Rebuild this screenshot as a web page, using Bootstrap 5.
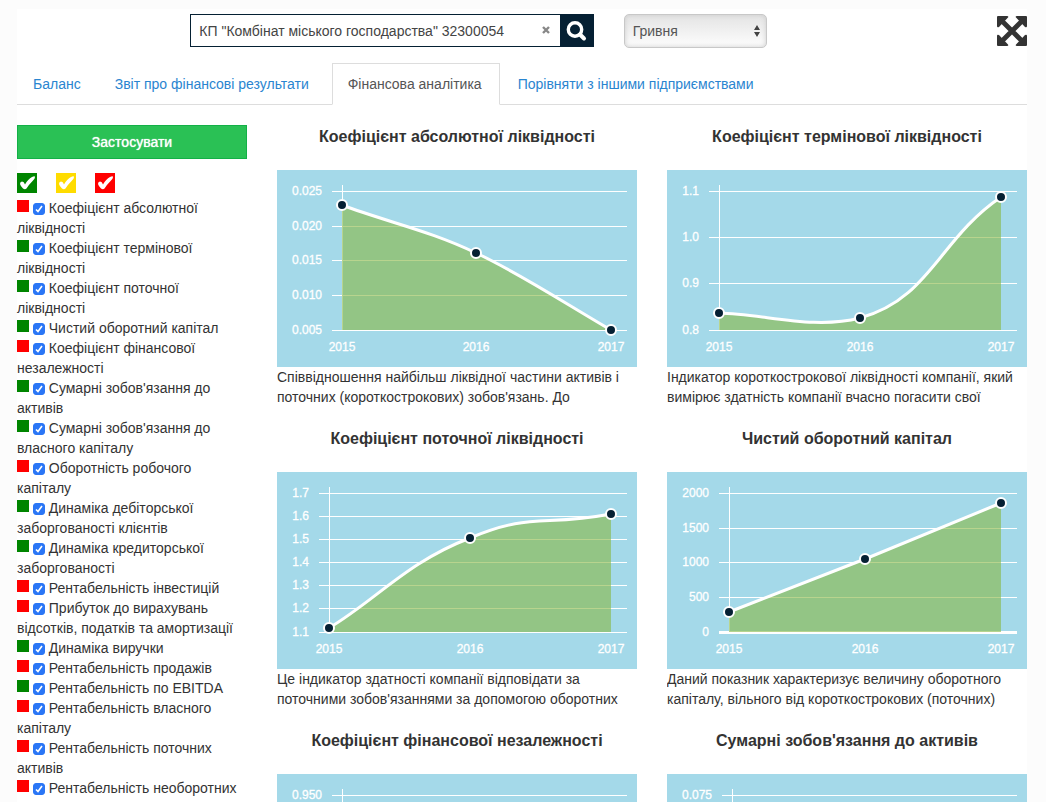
<!DOCTYPE html>
<html lang="uk">
<head>
<meta charset="utf-8">
<meta name="viewport" content="width=device-width, initial-scale=1">
<title>Фінансова аналітика</title>
<link href="https://cdn.jsdelivr.net/npm/bootstrap@5.3.0/dist/css/bootstrap.min.css" rel="stylesheet">
<style>
  body { background: #fcfcfc; color: #333; font: 14px/20px "Liberation Sans", Arial, sans-serif; padding: 9px 19px 0 17px; }
  .page { background: #fff; padding-top: 5px; }
  .row { --bs-gutter-x: 30px; }
  .search { border: 1px solid #052033; height: 33px; }
  .search input { border: 0; min-width: 0; padding: 0 8px; color: #444; background: #fff; outline: 0; }
  .search .clear { border: 0; background: none; padding: 0 9px 1px; line-height: 1; }
  .search .go { border: 0; background: #052033; width: 33px; padding: 0; }
  .currency { height: 34px; padding: 0 8px; border: 1px solid #c8c8c8; border-radius: 5px; color: #555; font-size: 14px; line-height: 20px; box-shadow: inset 0 0 5px #ccc;
    background: url("data:image/svg+xml,%3Csvg xmlns='http://www.w3.org/2000/svg' viewBox='0 0 6 12'%3E%3Cpath d='M0 5 3 0l3 5zM0 7h6l-3 5z' fill='%23444'/%3E%3C/svg%3E") no-repeat right 6px center / 6px 12px, linear-gradient(#e4e4e4, #fdfdfd); }
  .expand { border: 0; background: none; padding: 0; height: 30px; margin-top: 2px; }
  .nav-tabs { --bs-nav-tabs-border-color: #ddd; --bs-nav-tabs-border-radius: 0; margin: 15px 0 20px; }
  .nav-tabs .nav-link { padding: 10px 15px; margin-right: 2px; color: #2a85d0; }
  .nav-tabs .nav-link.active { color: #555; border-color: #ddd #ddd #fff; min-width: 168px; }
  .nav-tabs .tab-report { min-width: 231px; }
  .apply { height: 34px; border: 1px solid #13b047; border-radius: 0; background: #2ac155; color: #fff; font-size: 14px; line-height: 20px; padding: 0; text-shadow: 0 0 1px #fff; }
  .levels { gap: 19px; margin: 14px 0 5px; }
  .level { width: 20px; height: 20px; border: 0; padding: 0; display: block; }
  .ok { background: #008500; } .mid { background: #ffdc00; } .bad { background: #f00; }
  .swatch { display: inline-block; width: 12px; height: 12px; vertical-align: 1px; }
  .form-check-input { width: 12px; height: 12px; margin: 0; vertical-align: -2px; border-radius: 3px !important; }
  .form-check-input[type=checkbox]:checked { background-color: #2a76f6; border-color: #2a76f6;
    background-image: url("data:image/svg+xml,%3Csvg xmlns='http://www.w3.org/2000/svg' viewBox='0 0 10 10'%3E%3Cpath d='M2 5.500 4 7.500 8 2' fill='none' stroke='%23fff' stroke-width='1.600'/%3E%3C/svg%3E"); }
  .metric h4 { font-size: 16px; line-height: 24px; font-weight: 700; text-align: center; margin: 0 0 21px; }
  .metric p { height: 40px; overflow: hidden; margin: 0 0 20px; }
  .chart { display: block; width: 100%; background: #a4d9e9; font-size: 12px; }
  .chart text { fill: #fff; stroke: #fff; stroke-width: .3px; }
  .chart .y { text-anchor: end; } .chart .x { text-anchor: middle; }
  .grid-lines { stroke: #fff; fill: none; shape-rendering: crispEdges; }
  .area { fill: rgba(137,184,66,.6); }
  .curve { fill: none; stroke: #fff; stroke-width: 3; }
  .dots { fill: #052033; stroke: #fff; stroke-width: 2; }
</style>
<script src="https://cdn.jsdelivr.net/npm/bootstrap@5.3.0/dist/js/bootstrap.bundle.min.js"></script>
</head>
<body>
<main class="page">
  <div class="row">
    <div class="col-5 offset-2">
      <form class="search d-flex align-items-stretch">
        <input class="flex-grow-1" type="text" aria-label="Підприємство" value='КП "Комбінат міського господарства" 32300054'>
        <button class="clear" type="button" aria-label="Очистити"><svg class="d-block" width="10" height="10" viewBox="0 0 10 10"><path d="M2 2l6 6M8 2L2 8" stroke="#888" stroke-width="2.4"/></svg></button>
        <button class="go" type="button" aria-label="Пошук"><svg class="d-block mx-auto" width="22" height="22" viewBox="0 0 22 22" fill="none" stroke="#fff"><circle cx="10" cy="9.500" r="6.700" stroke-width="3.400"/><path d="M15 14.500l4 4" stroke-width="4" stroke-linecap="round"/></svg></button>
      </form>
    </div>
    <div class="col-2"><select class="form-select currency" aria-label="Валюта"><option>Гривня</option></select></div>
    <div class="col-3 d-flex justify-content-end align-items-start">
      <button class="expand" type="button" aria-label="На весь екран"><svg class="d-block" width="30" height="30" viewBox="0 0 30 30" fill="#333"><path d="M6 6l18 18M24 6L6 24" stroke="#333" stroke-width="4.800"/><path d="M1 0h9q2 0 1 1.500L2 11q-2 1-2-1V1q0-1 1-1zM29 0h-9q-2 0-1 1.500l9 9.500q2 1 2-1V1q0-1-1-1zM1 30h9q2 0 1-1.500L2 19q-2-1-2 1v9q0 1 1 1zM29 30h-9q-2 0-1-1.500l9-9.500q2-1 2 1v9q0 1-1 1z"/></svg></button>
    </div>
  </div>

  <ul class="nav nav-tabs">
    <li class="nav-item"><a class="nav-link" href="#">Баланс</a></li>
    <li class="nav-item"><a class="nav-link tab-report" href="#">Звіт про фінансові результати</a></li>
    <li class="nav-item"><a class="nav-link active" aria-current="page" href="#">Фінансова аналітика</a></li>
    <li class="nav-item"><a class="nav-link" href="#">Порівняти з іншими підприємствами</a></li>
  </ul>

  <div class="row">
    <aside class="col-3">
      <button class="btn apply w-100" type="button">Застосувати</button>
      <div class="levels d-flex">
        <button class="level ok" type="button" aria-label="Добре"><svg class="d-block" width="20" height="20"><path d="M3 11Q3 8.500 5 8.500T8 11.500Q11 6 15 4q3-1.500 3 0 0 1.500-2 3.500Q12 11.500 9.500 15.500 8 17 6 15.500 3.500 13 3 11z" fill="#fff"/></svg></button>
        <button class="level mid" type="button" aria-label="Задовільно"><svg class="d-block" width="20" height="20"><path d="M3 11Q3 8.500 5 8.500T8 11.500Q11 6 15 4q3-1.500 3 0 0 1.500-2 3.500Q12 11.500 9.500 15.500 8 17 6 15.500 3.500 13 3 11z" fill="#fff"/></svg></button>
        <button class="level bad" type="button" aria-label="Погано"><svg class="d-block" width="20" height="20"><path d="M3 11Q3 8.500 5 8.500T8 11.500Q11 6 15 4q3-1.500 3 0 0 1.500-2 3.500Q12 11.500 9.500 15.500 8 17 6 15.500 3.500 13 3 11z" fill="#fff"/></svg></button>
      </div>
      <div><span class="swatch bad"></span> <input class="form-check-input" type="checkbox" id="m1" checked> <label class="d-inline" for="m1">Коефіцієнт абсолютної ліквідності</label></div>
      <div><span class="swatch ok"></span> <input class="form-check-input" type="checkbox" id="m2" checked> <label class="d-inline" for="m2">Коефіцієнт термінової ліквідності</label></div>
      <div><span class="swatch ok"></span> <input class="form-check-input" type="checkbox" id="m3" checked> <label class="d-inline" for="m3">Коефіцієнт поточної ліквідності</label></div>
      <div><span class="swatch ok"></span> <input class="form-check-input" type="checkbox" id="m4" checked> <label class="d-inline" for="m4">Чистий оборотний капітал</label></div>
      <div><span class="swatch bad"></span> <input class="form-check-input" type="checkbox" id="m5" checked> <label class="d-inline" for="m5">Коефіцієнт фінансової незалежності</label></div>
      <div><span class="swatch ok"></span> <input class="form-check-input" type="checkbox" id="m6" checked> <label class="d-inline" for="m6">Сумарні зобов'язання до активів</label></div>
      <div><span class="swatch ok"></span> <input class="form-check-input" type="checkbox" id="m7" checked> <label class="d-inline" for="m7">Сумарні зобов'язання до власного капіталу</label></div>
      <div><span class="swatch bad"></span> <input class="form-check-input" type="checkbox" id="m8" checked> <label class="d-inline" for="m8">Оборотність робочого капіталу</label></div>
      <div><span class="swatch ok"></span> <input class="form-check-input" type="checkbox" id="m9" checked> <label class="d-inline" for="m9">Динаміка дебіторської заборгованості клієнтів</label></div>
      <div><span class="swatch ok"></span> <input class="form-check-input" type="checkbox" id="m10" checked> <label class="d-inline" for="m10">Динаміка кредиторської заборгованості</label></div>
      <div><span class="swatch bad"></span> <input class="form-check-input" type="checkbox" id="m11" checked> <label class="d-inline" for="m11">Рентабельність інвестицій</label></div>
      <div><span class="swatch bad"></span> <input class="form-check-input" type="checkbox" id="m12" checked> <label class="d-inline" for="m12">Прибуток до вирахувань відсотків, податків та амортизації</label></div>
      <div><span class="swatch ok"></span> <input class="form-check-input" type="checkbox" id="m13" checked> <label class="d-inline" for="m13">Динаміка виручки</label></div>
      <div><span class="swatch bad"></span> <input class="form-check-input" type="checkbox" id="m14" checked> <label class="d-inline" for="m14">Рентабельність продажів</label></div>
      <div><span class="swatch ok"></span> <input class="form-check-input" type="checkbox" id="m15" checked> <label class="d-inline" for="m15">Рентабельність по EBITDA</label></div>
      <div><span class="swatch bad"></span> <input class="form-check-input" type="checkbox" id="m16" checked> <label class="d-inline" for="m16">Рентабельність власного капіталу</label></div>
      <div><span class="swatch bad"></span> <input class="form-check-input" type="checkbox" id="m17" checked> <label class="d-inline" for="m17">Рентабельність поточних активів</label></div>
      <div><span class="swatch bad"></span> <input class="form-check-input" type="checkbox" id="m18" checked> <label class="d-inline" for="m18">Рентабельність необоротних</label></div>
    </aside>

    <div class="col-9">
      <div class="row">
        <section class="col-6 metric">
          <h4>Коефіцієнт абсолютної ліквідності</h4>
          <svg class="chart" viewBox="0 0 360 197">
            <path class="grid-lines" d="M55 21.500H350M55 56.500H350M55 90.500H350M55 125.500H350M55 160.500H350M65.500 15V160"/>
            <path class="area" d="M65 35C110 52 154 61 199 83C244 104 289 134 334 160H65z"/>
            <path class="curve" d="M65 35C110 52 154 61 199 83C244 104 289 134 334 160"/>
            <g class="dots"><circle cx="65" cy="35" r="5"/><circle cx="199" cy="83" r="5"/><circle cx="334" cy="160" r="5"/></g>
            <g class="y"><text x="45" y="25">0.025</text><text x="45" y="60">0.020</text><text x="45" y="94">0.015</text><text x="45" y="129">0.010</text><text x="45" y="164">0.005</text></g>
            <g class="x"><text x="65" y="181">2015</text><text x="199" y="181">2016</text><text x="334" y="181">2017</text></g>
          </svg>
          <p>Співвідношення найбільш ліквідної частини активів і поточних (короткострокових) зобов'язань. До</p>
        </section>
        <section class="col-6 metric">
          <h4>Коефіцієнт термінової ліквідності</h4>
          <svg class="chart" viewBox="0 0 360 197">
            <path class="grid-lines" d="M42 21.500H350M42 67.500H350M42 113.500H350M42 160.500H350M52.500 15V160"/>
            <path class="area" d="M52 143C98 144 146 160 193 148C263 129 272 69 334 27V160H52z"/>
            <path class="curve" d="M52 143C98 144 146 160 193 148C263 129 272 69 334 27"/>
            <g class="dots"><circle cx="52" cy="143" r="5"/><circle cx="193" cy="148" r="5"/><circle cx="334" cy="27" r="5"/></g>
            <g class="y"><text x="32" y="25">1.1</text><text x="32" y="71">1.0</text><text x="32" y="117">0.9</text><text x="32" y="164">0.8</text></g>
            <g class="x"><text x="52" y="181">2015</text><text x="193" y="181">2016</text><text x="334" y="181">2017</text></g>
          </svg>
          <p>Індикатор короткострокової ліквідності компанії, який вимірює здатність компанії вчасно погасити свої</p>
        </section>
        <section class="col-6 metric">
          <h4>Коефіцієнт поточної ліквідності</h4>
          <svg class="chart" viewBox="0 0 360 197">
            <path class="grid-lines" d="M42 21.500H350M42 44.500H350M42 67.500H350M42 90.500H350M42 113.500H350M42 136.500H350M42 160.500H350M52.500 15V160"/>
            <path class="area" d="M52 156C99 128 130 90 193 66C255 40 265 55 334 42V160H52z"/>
            <path class="curve" d="M52 156C99 128 130 90 193 66C255 40 265 55 334 42"/>
            <g class="dots"><circle cx="52" cy="156" r="5"/><circle cx="193" cy="66" r="5"/><circle cx="334" cy="42" r="5"/></g>
            <g class="y"><text x="32" y="25">1.7</text><text x="32" y="48">1.6</text><text x="32" y="71">1.5</text><text x="32" y="94">1.4</text><text x="32" y="117">1.3</text><text x="32" y="140">1.2</text><text x="32" y="164">1.1</text></g>
            <g class="x"><text x="52" y="181">2015</text><text x="193" y="181">2016</text><text x="334" y="181">2017</text></g>
          </svg>
          <p>Це індикатор здатності компанії відповідати за поточними зобов'язаннями за допомогою оборотних</p>
        </section>
        <section class="col-6 metric">
          <h4>Чистий оборотний капітал</h4>
          <svg class="chart" viewBox="0 0 360 197">
            <path class="grid-lines" d="M52 21.500H350M52 56.500H350M52 90.500H350M52 125.500H350M52 159.500H350M52 160.500H350M52 161.500H350M62.500 15V160"/>
            <path class="area" d="M62 140L198 87L334 31V160H62z"/>
            <path class="curve" d="M62 140L198 87L334 31"/>
            <g class="dots"><circle cx="62" cy="140" r="5"/><circle cx="198" cy="87" r="5"/><circle cx="334" cy="31" r="5"/></g>
            <g class="y"><text x="42" y="25">2000</text><text x="42" y="60">1500</text><text x="42" y="94">1000</text><text x="42" y="129">500</text><text x="42" y="164">0</text></g>
            <g class="x"><text x="62" y="181">2015</text><text x="198" y="181">2016</text><text x="334" y="181">2017</text></g>
          </svg>
          <p>Даний показник характеризує величину оборотного капіталу, вільного від короткострокових (поточних)</p>
        </section>
        <section class="col-6 metric">
          <h4>Коефіцієнт фінансової незалежності</h4>
          <svg class="chart" viewBox="0 0 360 197">
            <path class="grid-lines" d="M55 21.500H350M65.500 15V160"/>
            <text class="y" x="45" y="25">0.950</text>
          </svg>
        </section>
        <section class="col-6 metric">
          <h4>Сумарні зобов'язання до активів</h4>
          <svg class="chart" viewBox="0 0 360 197">
            <path class="grid-lines" d="M55 21.500H350M65.500 15V160"/>
            <text class="y" x="45" y="25">0.075</text>
          </svg>
        </section>
      </div>
    </div>
  </div>
</main>
</body>
</html>
